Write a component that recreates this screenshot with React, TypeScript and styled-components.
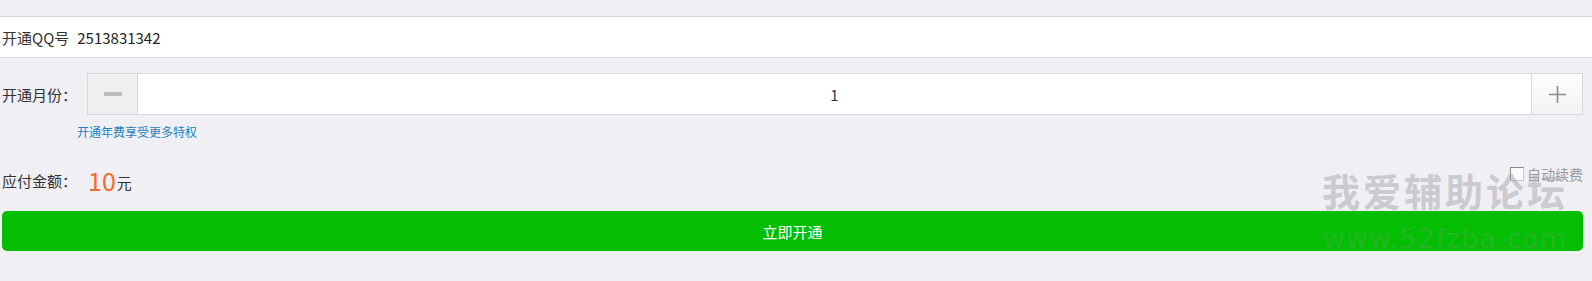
import styled, { createGlobalStyle } from 'styled-components';

const GlobalStyle = createGlobalStyle`
  html, body {
    margin: 0;
    padding: 0;
    background: #efeff4;
  }
  body {
    font-family: "Noto Sans CJK SC", "Noto Sans", sans-serif;
    color: #333;
  }
`;

const Page = styled.div`
  position: relative;
  width: 1592px;
  height: 281px;
  padding-top: 16px;
  box-sizing: border-box;
  overflow: hidden;
`;

const InfoRow = styled.div`
  display: flex;
  align-items: center;
  height: 40px;
  padding-left: 2px;
  background: #fff;
  border-top: 1px solid #d9d9d9;
  border-bottom: 1px solid #d9d9d9;
  font-size: 15px;
`;

const Value = styled.span`
  margin-left: 8px;
  font-size: 15px;
  color: #222;
`;

const FieldRow = styled.div`
  display: flex;
  align-items: center;
  margin: 15px 9px 0 2px;
  font-size: 15px;
`;

const Label = styled.span`
  width: 85px;
  flex-shrink: 0;
`;

const Stepper = styled.div`
  flex: 1;
  display: flex;
  height: 40px;
  border: 1px solid #d9d9d9;
  background: #fff;
`;

const StepButton = styled.div<{ $plus?: boolean }>`
  width: ${(p) => (p.$plus ? 50 : 49)}px;
  display: flex;
  align-items: center;
  justify-content: center;
  background: ${(p) => (p.$plus ? 'linear-gradient(#fdfdfd, #f3f3f3)' : '#efefef')};
  border-left: ${(p) => (p.$plus ? '1px solid #d9d9d9' : 'none')};
  border-right: ${(p) => (p.$plus ? 'none' : '1px solid #d9d9d9')};
`;

const Count = styled.div`
  flex: 1;
  display: flex;
  align-items: center;
  justify-content: center;
  font-size: 15px;
  color: #333;
`;

const Hint = styled.a`
  display: block;
  margin: 8px 0 0 77px;
  font-size: 12px;
  line-height: 17px;
  color: #1f7fc0;
  text-decoration: none;
`;

const AmountRow = styled.div`
  display: flex;
  align-items: center;
  height: 34px;
  margin: 23px 9px 0 2px;
  font-size: 15px;
`;

const AmountLabel = styled.span`
  width: 86px;
`;

const Price = styled.span`
  font-size: 25px;
  line-height: 1;
  color: #f7692a;
`;

const Unit = styled.span`
  font-size: 15px;
  margin-left: 1px;
  margin-top: 4px;
`;

const AutoRenew = styled.label`
  margin-left: auto;
  align-self: flex-start;
  margin-top: 1px;
  display: flex;
  align-items: center;
  gap: 3px;
  font-size: 14px;
  color: #999;
`;

const Box = styled.span`
  width: 14px;
  height: 14px;
  box-sizing: border-box;
  border: 1px solid #c8c8c8;
  border-left-color: #888;
  border-top-color: #888;
  background: #fafafa;
`;

const Submit = styled.button`
  display: block;
  width: calc(100% - 11px);
  height: 40px;
  margin: 14px 9px 0 2px;
  border: none;
  border-radius: 5px;
  background: #04be02;
  color: #fff;
  font-family: inherit;
  font-size: 15px;
`;

const Watermark = styled.div`
  position: absolute;
  left: 1322px;
  top: 168px;
  pointer-events: none;
  color: rgba(170, 170, 175, 0.55);
  text-align: center;
`;

const MarkTitle = styled.div`
  font-size: 38px;
  font-weight: 700;
  letter-spacing: 3px;
  line-height: 44px;
`;

const MarkUrl = styled.div`
  font-family: "DejaVu Sans", sans-serif;
  font-size: 27px;
  letter-spacing: 1px;
  line-height: 34px;
  margin-top: 10px;
  color: rgba(150, 150, 155, 0.22);
`;

export default function App() {
  return (
    <>
      <GlobalStyle />
      <Page>
        <InfoRow>
          开通QQ号<Value>2513831342</Value>
        </InfoRow>
        <FieldRow>
          <Label>开通月份：</Label>
          <Stepper>
            <StepButton>
              <svg width="18" height="4" viewBox="0 0 18 4">
                <rect width="18" height="4" fill="#bdbdbd" />
              </svg>
            </StepButton>
            <Count>1</Count>
            <StepButton $plus>
              <svg width="17" height="17" viewBox="0 0 17 17">
                <path d="M8.5 0v17M0 8.5h17" stroke="#8a8a8a" strokeWidth="1.6" />
              </svg>
            </StepButton>
          </Stepper>
        </FieldRow>
        <Hint href="#">开通年费享受更多特权</Hint>
        <AmountRow>
          <AmountLabel>应付金额：</AmountLabel>
          <Price>10</Price>
          <Unit>元</Unit>
          <AutoRenew>
            <Box />
            自动续费
          </AutoRenew>
        </AmountRow>
        <Submit>立即开通</Submit>
        <Watermark>
          <MarkTitle>我爱辅助论坛</MarkTitle>
          <MarkUrl>www.52fzba.com</MarkUrl>
        </Watermark>
      </Page>
    </>
  );
}
